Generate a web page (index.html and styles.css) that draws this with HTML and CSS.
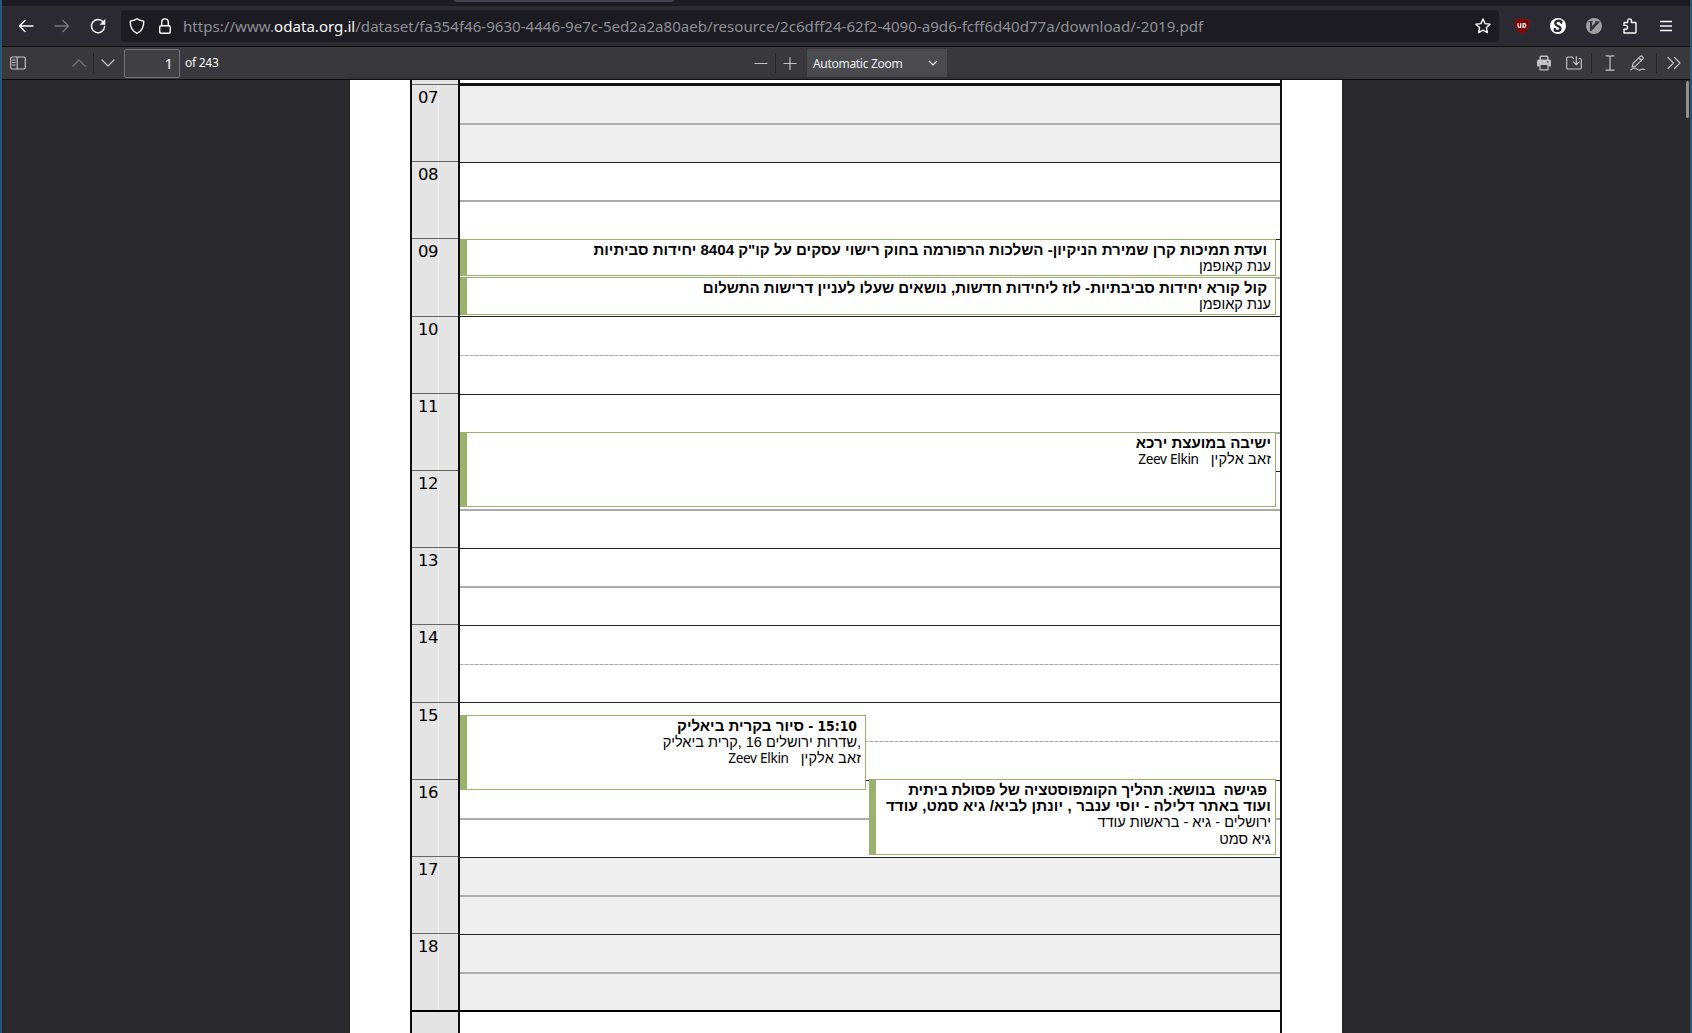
FILE: index.html
```html
<!DOCTYPE html>
<html lang="en">
<head>
<meta charset="utf-8">
<title>-2019.pdf</title>
<link rel="stylesheet" href="styles.css">
</head>
<body>
<div class="window">
  <div class="tabs"><div class="tab"></div></div>
  <nav class="nav">
    <svg class="ic back" viewBox="0 0 16 16"><path d="M15 8H1.500M7 2.500 1.500 8 7 13.500"/></svg>
    <svg class="ic fwd" viewBox="0 0 16 16"><path d="M1 8h13.500M9 2.500 14.500 8 9 13.500"/></svg>
    <svg class="ic reload" viewBox="0 0 16 16"><path d="M13.200 4A6.600 6.600 0 1 0 14.600 8.500"/><path class="solid" d="M15.300 1v5.700H9.600z"/></svg>
    <div class="urlbar">
      <svg class="ic shield" viewBox="0 0 16 16"><path d="M8 .8C6 2.300 3.800 2.700 1.300 3.100 1 8.500 3.200 13 8 15.300 12.800 13 15 8.500 14.700 3.100 12.200 2.700 10 2.300 8 .8z"/></svg>
      <svg class="ic lock" viewBox="0 0 16 16"><rect x="2.700" y="7.700" width="10.600" height="7.500" rx="1.500"/><path d="M4.700 7.500V4.200a3.300 3.300 0 0 1 6.600 0v3.300"/></svg>
      <span class="url">https://www.<b>odata.org.il</b>/dataset/fa354f46-9630-4446-9e7c-5ed2a2a80aeb/resource/2c6dff24-62f2-4090-a9d6-fcff6d40d77a/download/-2019.pdf</span>
      <svg class="ic star" viewBox="0 0 16 16"><path d="m8 1 2.100 4.600 5 .6-3.700 3.400 1 5L8 12.100l-4.400 2.500 1-5L.9 6.200l5-.6z"/></svg>
    </div>
    <svg class="ic ext ublock" viewBox="0 0 16 16"><path d="M8 .3C6 1.500 3.600 2 1 2c-.3 6.500 1 10.500 7 13.700C14 12.500 15.300 8.500 15 2 12.400 2 10 1.500 8 .3z"/><path class="mark" d="M4 5.500v2.600q0 1.300 1.500 1.300h1.200V5.500M9 5.700v3.700h1a1.850 1.850 0 0 0 0-3.700z"/></svg>
    <svg class="ic ext stylus" viewBox="0 0 16 16"><circle cx="8" cy="8" r="8"/><path d="M11.300 4.800V3.400C9.500 2.300 5 2.500 5.300 5.600c.3 2.500 5.500 2.500 5.200 5-.3 2.800-4.300 2.700-5.700 1.700v-1.500"/></svg>
    <svg class="ic ext vim" viewBox="0 0 16 16"><circle cx="8" cy="8" r="8"/><path class="v" d="M2.500 3.200h4.300v1H6v4l3.700-4H9v-1h4.500v1L5.300 13H4V4.200H2.500z"/></svg>
    <svg class="ic ext puzzle" viewBox="0 0 16 16"><path d="M2 15V11.200h1.700a1.900 1.900 0 0 0 0-3.800H2V5.200q0-.7.700-.7h3V2.800a1.900 1.900 0 0 1 3.800 0v1.700h3.800q.7 0 .7.700v9.100q0 .7-.7.700z"/></svg>
    <svg class="ic menu" viewBox="0 0 16 16"><path d="M2 3.500h12M2 8h12M2 12.500h12"/></svg>
  </nav>
  <div class="toolbar">
    <svg class="ic side" viewBox="0 0 16 16"><rect x=".7" y="2" width="14.600" height="12" rx="1.500"/><path d="M7.200 2v12M2.600 5h2.600M2.600 7.500h2.600M2.600 10h2.600"/></svg>
    <svg class="ic up" viewBox="0 0 16 16"><path d="m2 11 6-6 6 6"/></svg>
    <i class="sep"></i>
    <svg class="ic down" viewBox="0 0 16 16"><path d="m2 5 6 6 6-6"/></svg>
    <div class="pageno">1</div>
    <span class="count">of 243</span>
    <svg class="ic minus" viewBox="0 0 16 16"><path d="M2 8.500h12"/></svg>
    <i class="sep sep-zoom"></i>
    <svg class="ic plus" viewBox="0 0 16 16"><path d="M2 8.500h12M8 2.500v12"/></svg>
    <div class="select"><span>Automatic Zoom</span><svg viewBox="0 0 10 10"><path d="m1 3 4 4 4-4"/></svg></div>
    <svg class="ic print" viewBox="0 0 16 16"><path class="solid" d="M3.500 4.500V2q0-1.500 1.500-1.500h6q1.500 0 1.500 1.500v2.500h1q1.500 0 1.500 1.500v5.500h-2.500V9.500h-9v2H1V6q0-1.500 1.500-1.500zM5 4.500h6V2H5zM11 6.200v1.300h1.500V6.200z" fill-rule="evenodd"/><path d="M4 9.500h8v5.300H4z"/></svg>
    <svg class="ic save" viewBox="0 0 16 16"><path d="M7.500 3.500 6 2H2Q.7 2 .7 3.300v9.400Q.7 14 2 14h12q1.300 0 1.300-1.300V5Q15.300 3.500 14 3.500h-1M10.300 1.500v8M7.300 6.800l3 3 3-3"/></svg>
    <i class="sep"></i>
    <svg class="ic text" viewBox="0 0 16 16"><path d="M4 .8h2.500Q8 .8 8 2q0-1.200 1.500-1.200H12M8 2v12M4 15.200h2.500Q8 15.200 8 14q0 1.200 1.500 1.200H12"/></svg>
    <svg class="ic pen" viewBox="0 0 16 16"><path d="m2.200 12 .8-3.500L10.400 1.400q.9-.8 1.800 0l.7.7q.9.900 0 1.800L5.600 11.200zM9 3l2.500 2.500M.8 14.800c3-2.500 5.500-1.500 7 0q2 .8 3.200-.3 1.500-.8 3.700 0"/></svg>
    <i class="sep"></i>
    <svg class="ic more" viewBox="0 0 16 16"><path d="m2 2.500 5.500 5.500L2 13.500M8.500 2.500 14 8l-5.500 5.500"/></svg>
  </div>
  <main class="viewer">
    <div class="page">
      <div class="hours">
        <div class="hour">07</div><div class="hour">08</div><div class="hour">09</div><div class="hour">10</div>
        <div class="hour">11</div><div class="hour">12</div><div class="hour">13</div><div class="hour">14</div>
        <div class="hour">15</div><div class="hour">16</div><div class="hour">17</div><div class="hour last">18</div>
        <div class="tail"></div>
      </div>
      <div class="day">
        <div class="slot off first"></div><div class="slot"></div><div class="slot"></div><div class="slot soft"></div>
        <div class="slot"></div><div class="slot"></div><div class="slot"></div><div class="slot soft"></div>
        <div class="slot soft"></div><div class="slot"></div><div class="slot off"></div><div class="slot off last"></div>
        <div class="rest"></div>
        <section class="event ev-clean" dir="rtl">
          <h2 class="inset t1">ועדת תמיכות קרן שמירת הניקיון- השלכות הרפורמה בחוק רישוי עסקים על קו"ק 8404 יחידות סביתיות</h2>
          <p>ענת קאופמן</p>
        </section>
        <section class="event ev-call" dir="rtl">
          <h2 class="inset t2">קול קורא יחידות סביבתיות- לוז ליחידות חדשות, נושאים שעלו לעניין דרישות התשלום</h2>
          <p>ענת קאופמן</p>
        </section>
        <section class="event ev-council" dir="rtl">
          <h2>ישיבה במועצת ירכא</h2>
          <p class="who"><span>זאב אלקין</span><span class="latin">Zeev Elkin</span></p>
        </section>
        <section class="event ev-tour" dir="rtl">
          <h2 class="inset"><span class="num">15:10</span> - סיור בקרית ביאליק</h2>
          <p>,שדרות ירושלים 16 ,קרית ביאליק</p>
          <p class="who"><span>זאב אלקין</span><span class="latin">Zeev Elkin</span></p>
        </section>
        <section class="event ev-compost" dir="rtl">
          <h2 class="inset t5">פגישה&nbsp; בנושא: תהליך הקומפוסטציה של פסולת ביתית</h2>
          <h2 class="t6">ועוד באתר דלילה - יוסי ענבר , יונתן לביא/ גיא סמט, עודד</h2>
          <p>ירושלים - גיא - בראשות עודד</p>
          <p>גיא סמט</p>
        </section>
      </div>
    </div>
    <div class="scroll"></div>
  </main>
</div>
</body>
</html>
```
FILE: styles.css
```css
* { box-sizing: border-box; }
body { margin: 0; background: #2a2a2e; font-family: "Noto Sans", sans-serif; }
.window { width: 1692px; height: 1033px; overflow: hidden; display: flex; flex-direction: column; border: solid #2a567a; border-width: 0 2px; background: #2a2a2e; }
.tabs { height: 6px; flex: none; background: #1c1b22; }
.tab { width: 220px; height: 2px; margin-left: 452px; background: #42414d; border-radius: 0 0 3px 3px; }
.ic { width: 16px; height: 16px; flex: none; fill: none; stroke: #fbfbfe; stroke-width: 1.4; stroke-linecap: round; stroke-linejoin: round; overflow: visible; }
.solid { fill: currentColor; stroke: none; }

.nav { height: 41px; flex: none; display: flex; align-items: center; padding: 0 16px 1px; background: #2b2a33; border-bottom: 1px solid #0c0c0d; color: #fbfbfe; }
.fwd { margin-left: 20px; stroke: #77767e; }
.reload { margin-left: 20px; }
.urlbar { width: 1378px; height: 32px; margin-left: 15px; padding: 0 8px; display: flex; align-items: center; background: #1c1b22; border-radius: 4px; }
.lock { margin-left: 12px; }
.url { width: 1020px; margin-left: 10px; color: #8f8f96; font-size: 15.1px; line-height: 30px; white-space: nowrap; }
.url b { font-weight: 400; color: #fbfbfe; }
.star { margin-left: auto; }
.ext { margin-left: 20px; }
.ublock { margin-left: 15px; fill: #800000; stroke: #8b2024; stroke-width: .5; }
.ublock .mark { fill: none; stroke: #fff; stroke-width: 1.2; }
.stylus { fill: #fff; stroke: none; }
.stylus path { fill: none; stroke: #2b2a33; stroke-width: 2.3; }
.vim { fill: #a0a0a0; stroke: none; }
.vim .v { fill: #33323a; }
.menu { margin-left: 20px; stroke-linecap: butt; }

.toolbar { height: 33px; flex: none; display: flex; align-items: center; padding-left: 8px; background: #38383d; border-bottom: 1px solid #0c0c0d; color: #c3c3c5; }
.toolbar .ic { stroke: #c3c3c5; stroke-width: 1.2; }
.toolbar .up { margin-left: 45px; stroke: #77777b; }
.toolbar .down { margin-left: 6px; }
.sep { width: 1px; height: 20px; flex: none; margin-left: 6px; background: #242428; }
.pageno { width: 56px; height: 29px; margin-left: 8px; padding-right: 6px; border: 1px solid #73737a; border-radius: 2px; background: #404044; color: #f9f9fa; font-size: 15px; line-height: 27px; text-align: right; }
.count { width: 40px; margin-left: 5px; color: #f9f9fa; font-size: 12px; letter-spacing: -.25px; line-height: 30px; white-space: nowrap; }
.minus { margin-left: 528px; }
.plus { margin-left: 6px; }
.select { width: 140px; height: 28px; margin-left: 9px; padding: 0 9px 0 6px; display: flex; align-items: center; justify-content: space-between; background: #4a4a4f; color: #f0f0f2; font-size: 12px; letter-spacing: -.3px; white-space: nowrap; }
.select svg { width: 10px; height: 10px; fill: none; stroke: #f0f0f2; stroke-width: 1.2; }
.print { margin-left: 589px; }
.save { margin-left: 14px; }
.save + .sep { margin-left: 9px; }
.text { margin-left: 10px; }
.pen { margin-left: 12px; }
.pen + .sep { margin-left: 10px; }
.more { margin-left: 9px; }

.viewer { flex: 1; display: flex; align-items: flex-start; justify-content: space-between; padding-left: 348px; }
.page { width: 992px; height: 953px; padding-left: 60px; display: flex; background: #fff; box-shadow: 0 0 5px #202023; }
.hours { width: 50px; height: 953px; flex: none; display: flex; flex-direction: column; padding-top: 4px; background: #e4e4e4; border: solid #0c0c0c; border-width: 0 2px; }
.hour { height: 77.2px; flex: none; padding-left: 6px; border-top: 1px solid #666; color: #000; font: 16.5px/25px "DejaVu Sans", sans-serif; letter-spacing: -.6px; background: linear-gradient(90deg, transparent 26px, #efefef 26px, #efefef 27px, transparent 27px); }
.hours .last, .day .last { height: 76.5px; }
.tail { flex: 1; border-top: 2px solid #000; }
.day { position: relative; width: 822px; height: 953px; flex: none; padding-top: 3px; display: flex; flex-direction: column; border-right: 2px solid #111; }
.slot { height: 77.2px; flex: none; border-top: 1px solid #222; background: linear-gradient(#aaa, #aaa) 0 37px / 100% 2px no-repeat, #fff; }
.soft { background: repeating-linear-gradient(90deg, #aaa 0 3px, #ccc 3px 5px) 0 38px / 100% 1px no-repeat, #fff; }
.off { background: linear-gradient(#adadad, #adadad) 0 37px / 100% 2px no-repeat, #efefef; }
.first { height: 79px; border-top: 3px solid #111; }
.rest { border-top: 2px solid #000; }

/* appointments lie over the hour grid */
.event { position: absolute; padding: 2px 4px 0 0; overflow: hidden; background: #fff; border: 1px solid #9ab36c; border-left-width: 7px; color: #000; white-space: nowrap; }
.event h2, .event p { margin: 0; line-height: 16.2px; }
.event h2 { font: bold 15.1px/16.2px "Liberation Sans", sans-serif; }
.event p { font: 14.5px/16.2px "Liberation Sans", sans-serif; }
.event .inset { padding-right: 4px; }
.num { font: bold 13.8px/16px "DejaVu Sans Condensed", sans-serif; }
.event .who { display: flex; gap: 12px; letter-spacing: .15px; }
.latin { font: 13.6px/16.2px "Noto Sans", sans-serif; letter-spacing: -.3px; }
.ev-clean { left: 0; top: 159px; width: 816px; height: 37px; }
.ev-call { left: 0; top: 197px; width: 816px; height: 38px; }
.ev-council { left: 0; top: 352px; width: 816px; height: 75px; }
.ev-tour { left: 0; top: 635px; width: 406px; height: 75px; }
.ev-compost { left: 409px; top: 699px; width: 407px; height: 76px; }
.t2 { letter-spacing: -.02px; }
.t6 { letter-spacing: .12px; }
.t5 { letter-spacing: -.1px; }
.scroll { width: 3px; height: 37px; margin: 1px 1px 0 0; background: #8f8f94; border-radius: 2px; }
```
